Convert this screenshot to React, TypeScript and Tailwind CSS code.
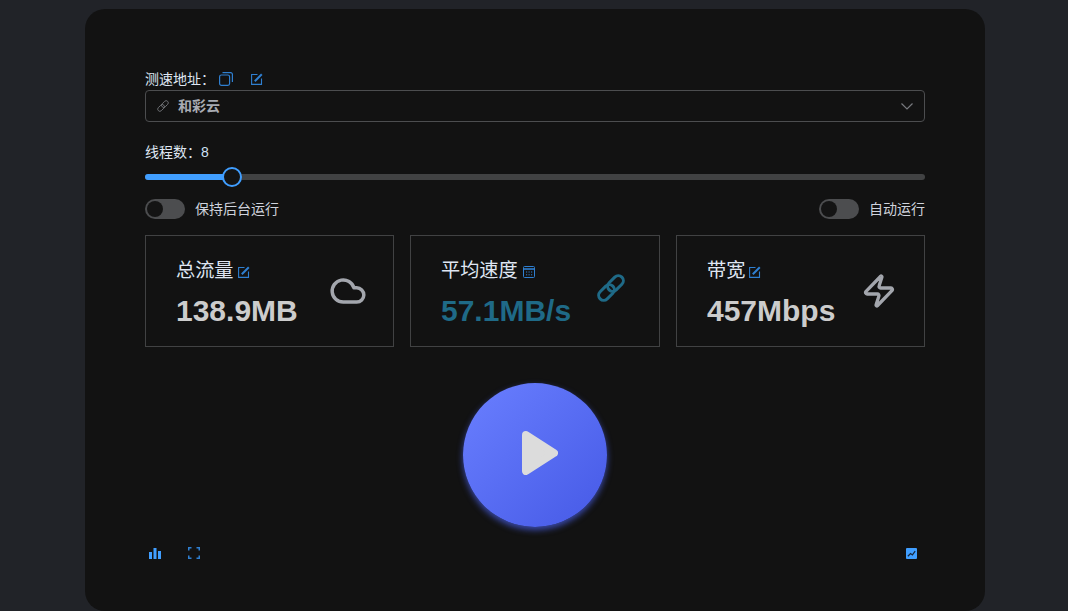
import { Cloud, Zap } from "lucide-react";
import type { ReactNode } from "react";

const sans = "font-['Liberation_Sans','Noto_Sans_CJK_SC',sans-serif]";

function Toggle({ label }: { label: string }) {
  return (
    <div className="flex items-center gap-[10px]">
      <div className="flex h-5 w-10 items-center rounded-full bg-[#4c4d4f] pl-[2px]">
        <div className="h-4 w-4 rounded-full bg-[#141414]" />
      </div>
      <span className="text-[14px] leading-5 text-[#cfd3dc]">{label}</span>
    </div>
  );
}

function EditIcon({ className }: { className: string }) {
  return (
    <svg viewBox="0 0 12 12" className={className} fill="none" stroke="currentColor" strokeWidth="1.1">
      <path d="M6.500 1.500H.6v9.900h9.900V5.500" />
      <path d="M3.800 8.200 10.800 1.200" strokeWidth="2" />
    </svg>
  );
}

function CopyIcon() {
  return (
    <svg viewBox="0 0 14 14" className="ml-[4px] h-[14px] w-[14px] text-[#2f7fd0]" fill="none" stroke="currentColor" strokeWidth="1.2">
      <rect x="0.600" y="3" width="10" height="10.400" rx="1.800" />
      <path d="M3.500 0.600h8a1.800 1.800 0 0 1 1.900 1.900v7.500" />
    </svg>
  );
}

function LinkIcon({ className, strokeWidth }: { className: string; strokeWidth: number }) {
  return (
    <svg viewBox="0 0 28 28" className={className} fill="none" stroke="currentColor" strokeWidth={strokeWidth}>
      <rect x="0.500" y="13.500" width="18" height="10" rx="5" transform="rotate(-45 9.500 18.500)" />
      <rect x="9.500" y="4.500" width="18" height="10" rx="5" transform="rotate(-45 18.500 9.500)" />
    </svg>
  );
}

function CalendarIcon() {
  return (
    <svg viewBox="0 0 14 14" className="mt-[3px] h-[14px] w-[14px] text-[#2f7fd0]" fill="none" stroke="currentColor">
      <rect x="1.500" y="1.500" width="11" height="11" rx="1" />
      <path d="M1.500 4h11" strokeWidth="1.600" />
      <path d="M4 7h1.200M6.500 7h1.200M9 7h1.200M4 9.800h1.200M6.500 9.800h1.200M9 9.800h1.200" strokeWidth="1" />
    </svg>
  );
}

function Stat(props: { title: string; value: string; tag: ReactNode; icon: ReactNode; valueClass: string; grow: string }) {
  return (
    <div className={`flex h-[112px] items-center justify-between border border-[#414243] pl-[30px] ${props.grow}`}>
      <div className="mt-[4px]">
        <div className="flex h-[24px] items-center gap-1 text-[19.2px] leading-6 text-[#dfe6f2]">
          {props.title}
          {props.tag}
        </div>
        <div className={`mt-[11px] text-[30px] leading-[34px] font-bold ${props.valueClass}`}>{props.value}</div>
      </div>
      {props.icon}
    </div>
  );
}

export default function App() {
  const tagIcon = "mt-[3px] h-[12px] w-[12px] text-[#2f7fd0]";
  return (
    <div className={`flex h-[611px] justify-center overflow-hidden bg-[#212328] pt-[9px] pl-[2px] ${sans}`}>
      <div className="flex h-[602px] w-[900px] flex-col rounded-[20px] bg-[#121212] px-[60px] pt-[60px]">
        <div className="flex h-[20px] items-center text-[14px] text-[#dfe6f2]">
          <span>测速地址：</span>
          <CopyIcon />
          <EditIcon className="ml-[18px] h-[12px] w-[12px] text-[#2f7fd0]" />
        </div>
        <div className="mt-[1px] flex h-[32px] items-center rounded-[4px] border border-[#4c4d4f] pr-[11px] pl-[11px]">
          <LinkIcon className="h-3 w-3 text-[#77797e]" strokeWidth={2} />
          <span className="ml-[9px] text-[14px] font-bold text-[#a8abb2]">和彩云</span>
          <svg viewBox="0 0 12 7" className="ml-auto h-[7px] w-3 text-[#77797e]" fill="none" stroke="currentColor" strokeWidth="1.200">
            <path d="M.5.500 6 6l5.500-5.500" />
          </svg>
        </div>

        <div className="mt-[20px] flex h-[20px] items-center text-[14px] text-[#dfe6f2]">
          <span>线程数：</span>
          <span className="text-[#cfe0f5]">8</span>
        </div>
        <div className="relative mt-[12px] h-[6px] rounded-full bg-[#414243]">
          <div className="h-[6px] w-[87px] rounded-full bg-[#409eff]" />
          <div className="absolute top-[-7px] left-[77px] h-5 w-5 rounded-full border-2 border-[#409eff] bg-[#141414]" />
        </div>

        <div className="mt-[19px] flex justify-between">
          <Toggle label="保持后台运行" />
          <Toggle label="自动运行" />
        </div>

        <div className="mt-[16px] flex gap-[16px]">
          <Stat
            grow="w-[249px] pr-[26px]"
            title="总流量"
            value="138.9MB"
            valueClass="text-[#cccccc]"
            tag={<EditIcon className={tagIcon} />}
            icon={<Cloud className="h-[38px] w-[38px] text-[#a3a6ad]" strokeWidth={2.2} />}
          />
          <Stat
            grow="w-[250px] pr-[34px]"
            title="平均速度"
            value="57.1MB/s"
            valueClass="text-[#1f6a87]"
            tag={<CalendarIcon />}
            icon={<LinkIcon className="mt-[-6px] h-[28px] w-[28px] text-[#1f6a87]" strokeWidth={3} />}
          />
          <Stat
            grow="w-[249px] pr-[27px]"
            title="带宽"
            value="457Mbps"
            valueClass="text-[#cccccc]"
            tag={<EditIcon className={tagIcon} />}
            icon={<Zap className="h-[36px] w-[36px] text-[#a3a6ad]" strokeWidth={2.2} />}
          />
        </div>

        <div className="mt-[36px] flex justify-center">
          <div className="flex h-[144px] w-[144px] items-center justify-center rounded-full bg-gradient-to-br from-[#6a7fff] to-[#4659e6] shadow-[0_3px_6px_rgba(80,105,255,0.65)]">
            <svg viewBox="0 0 36 44" className="mb-[4px] ml-[10px] h-[44px] w-[36px]" fill="#dcdcdc" stroke="#dcdcdc" strokeWidth="8" strokeLinejoin="round">
              <path d="M4 4 32 22 4 40Z" />
            </svg>
          </div>
        </div>

        <div className="mt-[20px] flex items-center px-[4px]">
          <svg viewBox="0 0 12 12" className="h-3 w-3 text-[#409eff]" fill="currentColor">
            <path d="M0 5h3v7H0zM4.500 1h3v11h-3zM9 4h3v8H9z" />
          </svg>
          <svg viewBox="0 0 12 12" className="ml-[27px] h-3 w-3 text-[#2f7fd0]" fill="none" stroke="currentColor" strokeWidth="1.500">
            <path d="M.75 3.500V.75h2.750M8.500.75h2.750v2.750M11.250 8.500v2.750H8.500M3.500 11.250H.75V8.500" />
          </svg>
          <svg viewBox="0 0 12 12" className="mr-[4px] ml-auto h-[11px] w-[11px]" fill="none">
            <rect width="12" height="12" rx="1" fill="#409eff" />
            <path d="M2 9l3-3 2 1.500L10 3.500" stroke="#16263a" strokeWidth="1.300" />
          </svg>
        </div>
      </div>
    </div>
  );
}
